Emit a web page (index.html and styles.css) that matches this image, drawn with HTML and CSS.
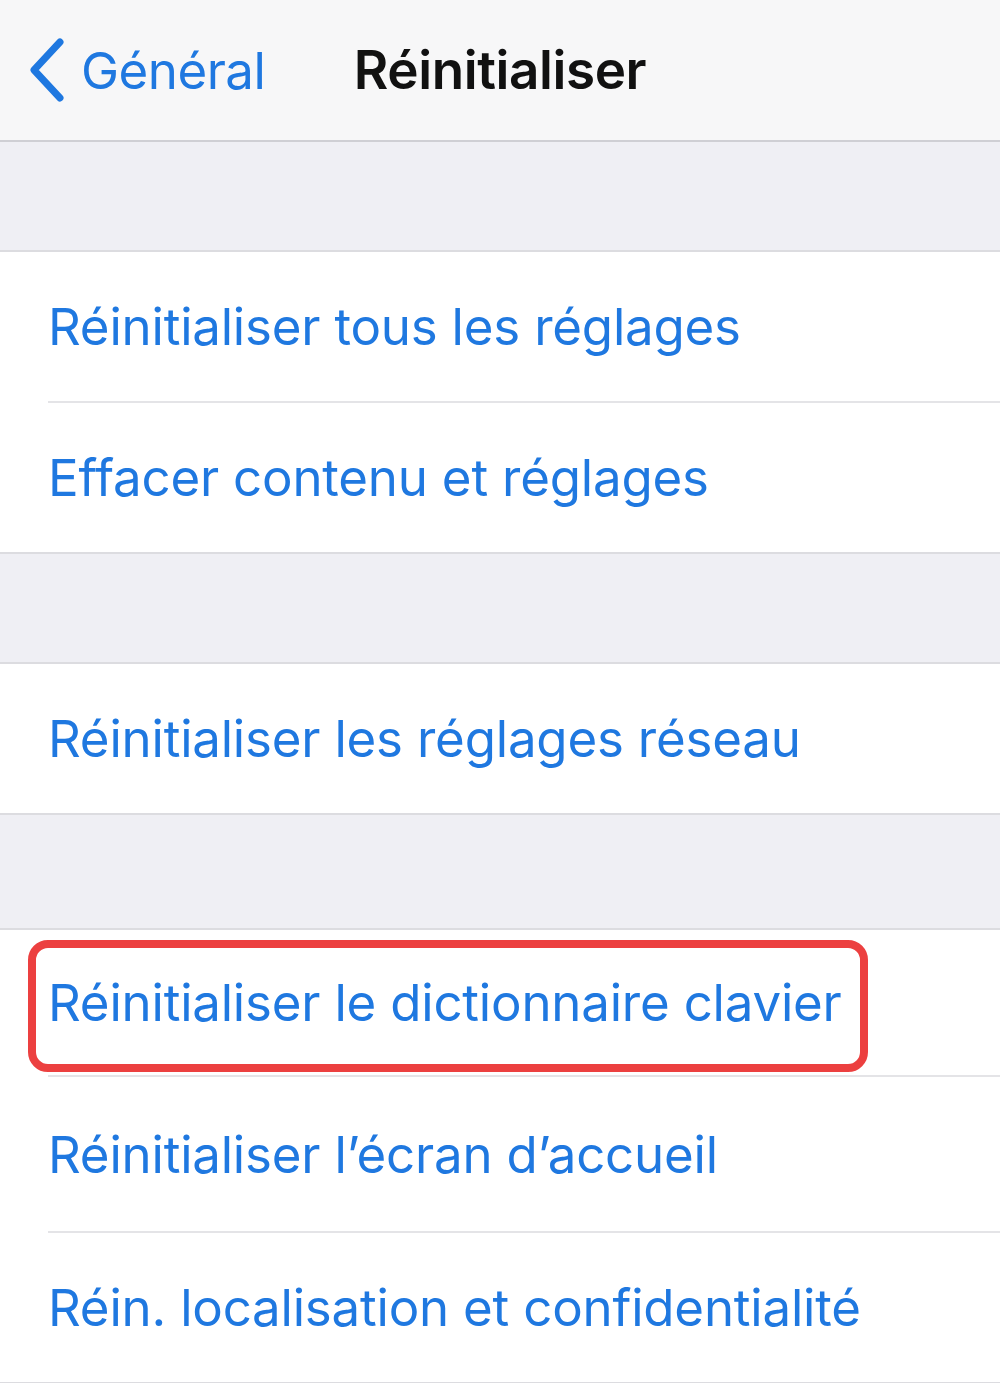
FILE: index.html
```html
<!DOCTYPE html>
<html lang="fr">
<head>
    <meta charset="UTF-8">
    <title>Réinitialiser</title>
    <link rel="stylesheet" href="styles.css">
</head>
<body>
<div class="navbar">
    <a class="back-btn" href="#">
        <svg class="chevron" viewBox="0 0 42 68" width="42" height="68">
            <path d="M34 6 L8 34 L34 62" fill="none" stroke="#1f78e0" stroke-width="7" stroke-linecap="round" stroke-linejoin="round"/>
        </svg>
        <span>Général</span>
    </a>
    <div class="nav-title">Réinitialiser</div>
</div>

<div class="spacer"></div>
<div class="group">
    <div class="row">Réinitialiser tous les réglages</div>
    <div class="row">Effacer contenu et réglages</div>
</div>

<div class="spacer"></div>
<div class="group">
    <div class="row">Réinitialiser les réglages réseau</div>
</div>

<div class="spacer spacer-tall"></div>
<div class="group">
    <div class="row row-short">
        Réinitialiser le dictionnaire clavier
        <div class="mark"></div>
    </div>
    <div class="row row-tall">Réinitialiser l’écran d’accueil</div>
    <div class="row">Réin. localisation et confidentialité</div>
</div>
</body>
</html>
```

FILE: styles.css
```css
body {
    margin: 0;
    padding: 0;
    font-family: Inter, 'Liberation Sans', Arial, sans-serif;
    background: #efeff4;
    overflow: hidden;
}
.navbar {
    height: 140px;
    background: #f7f7f8;
    border-bottom: 2px solid #cfcfd4;
    display: flex;
    align-items: center;
    position: relative;
}
.back-btn {
    display: flex;
    align-items: center;
    gap: 13px;
    padding-left: 26px;
    color: #1f78e0;
    text-decoration: none;
    font-size: 51px;
    letter-spacing: -0.5px;
    z-index: 1;
}
.chevron {
    display: block;
}
.nav-title {
    position: absolute;
    left: 0; right: 0;
    text-align: center;
    font-size: 53px;
    font-weight: 600;
    color: #111;
    letter-spacing: -0.4px;
}
.spacer {
    height: 108px;
}
.spacer-tall {
    height: 113px;
}
.group {
    background: #fff;
    border-top: 2px solid #dcdce0;
    border-bottom: 2px solid #dcdce0;
}
.row {
    height: 149px;
    display: flex;
    align-items: center;
    margin-left: 48px;
    border-bottom: 2px solid #e4e4e7;
    color: #1f78e0;
    font-size: 51px;
    letter-spacing: -0.2px;
    white-space: nowrap;
    position: relative;
}
.row-short {
    height: 145px;
}
.row-tall {
    height: 154px;
}
.row:last-child {
    border-bottom: none;
}
.mark {
    position: absolute;
    left: -20px;
    top: 10px;
    width: 824px;
    height: 116px;
    border: 8px solid #ec4040;
    border-radius: 20px;
}
```
